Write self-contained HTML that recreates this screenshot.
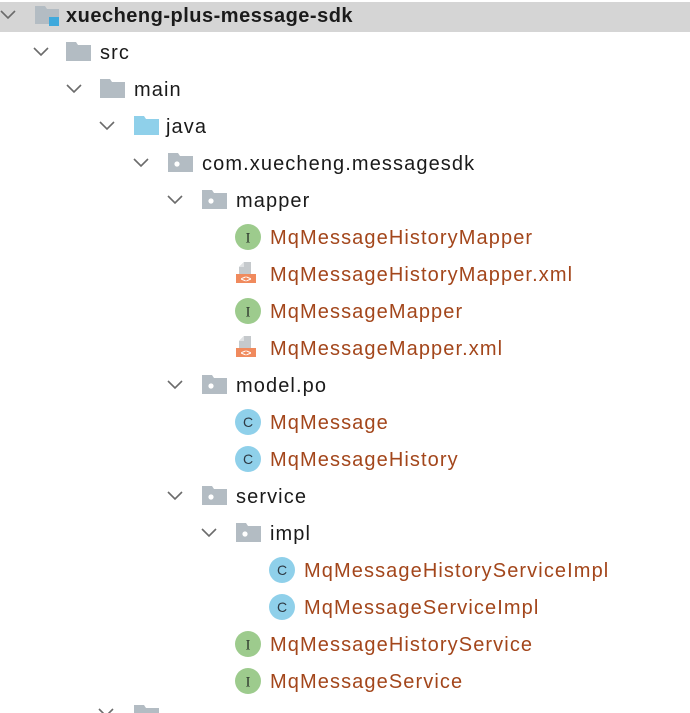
<!DOCTYPE html>
<html><head><meta charset="utf-8"><style>
body{margin:0;width:690px;height:713px;overflow:hidden;background:#fff;font-family:"Liberation Sans","Noto Sans CJK SC",sans-serif;position:relative}
.hdr{position:absolute;left:0;top:2px;width:690px;height:30px;background:#d5d5d5}
.r{position:absolute;height:37px;line-height:37px;font-size:20px;letter-spacing:1.1px;color:#1a1a1a;white-space:nowrap}
.o{color:#a3461b}
</style></head><body>
<div class="hdr"></div>
<svg width="690" height="713" style="position:absolute;left:0;top:0">
<defs>
<g id="chev"><path d="M0 0 L7 7 L14 0" fill="none" stroke="#6b6b6b" stroke-width="1.6"/></g>
<g id="fold"><path d="M0 0 H10 L12 3 H25 V19 H0 Z" fill="#b3bcc3"/></g>
<g id="pkg"><path d="M0 0 H10 L12 3 H25 V19 H0 Z" fill="#b3bcc3"/><circle cx="9" cy="11" r="2.6" fill="#fff"/></g>
<g id="jfold"><path d="M0 0 H10 L12 3 H25 V19 H0 Z" fill="#8fd0ea"/></g>
<g id="I"><circle cx="13" cy="13" r="13" fill="#9dcb8d"/><text x="13" y="18.5" font-family="Liberation Serif,serif" font-size="15" text-anchor="middle" fill="#2e3a2e">I</text></g>
<g id="C"><circle cx="13" cy="13" r="13" fill="#8fd0ea"/><text x="13" y="18" font-family="Liberation Sans,sans-serif" font-size="14" text-anchor="middle" fill="#2e3a44">C</text></g>
<g id="X"><path d="M8 0 H15 V12 H3 V5 Z" fill="#c5c9cc"/><path d="M8 0 V5 H3" fill="#e0e2e4"/><rect x="0" y="12" width="20" height="9" fill="#f08a5d"/><text x="10" y="20" font-family="Liberation Sans,sans-serif" font-size="9" font-weight="bold" text-anchor="middle" fill="#fff">&lt;&gt;</text></g>
</defs>
<use href="#chev" x="1" y="11"/>
<path d="M35 6 H45 L47 9 H59 V24 H35 Z" fill="#b3bcc3"/><rect x="49" y="17" width="10" height="9" fill="#3fa9dc"/>
<use href="#chev" x="34" y="48"/><use href="#fold" x="66" y="42"/>
<use href="#chev" x="67" y="85"/><use href="#fold" x="100" y="79"/>
<use href="#chev" x="100" y="122"/><use href="#jfold" x="134" y="116"/>
<use href="#chev" x="134" y="159"/><use href="#pkg" x="168" y="153"/>
<use href="#chev" x="168" y="196"/><use href="#pkg" x="202" y="190"/>
<use href="#I" x="235" y="224"/>
<use href="#X" x="236" y="262"/>
<use href="#I" x="235" y="298"/>
<use href="#X" x="236" y="336"/>
<use href="#chev" x="168" y="381"/><use href="#pkg" x="202" y="375"/>
<use href="#C" x="235" y="409"/>
<use href="#C" x="235" y="446"/>
<use href="#chev" x="168" y="492"/><use href="#pkg" x="202" y="486"/>
<use href="#chev" x="202" y="529"/><use href="#pkg" x="236" y="523"/>
<use href="#C" x="269" y="557"/>
<use href="#C" x="269" y="594"/>
<use href="#I" x="235" y="631"/>
<use href="#I" x="235" y="668"/>
<use href="#chev" x="99" y="709"/><use href="#fold" x="134" y="705"/>
</svg>
<div class="r" style="left:66px;top:-2px;font-weight:bold;font-size:20px;letter-spacing:0.5px">xuecheng-plus-message-sdk</div>
<div class="r" style="left:100px;top:35px">src</div>
<div class="r" style="left:134px;top:72px">main</div>
<div class="r" style="left:166px;top:109px">java</div>
<div class="r" style="left:202px;top:146px">com.xuecheng.messagesdk</div>
<div class="r" style="left:236px;top:183px">mapper</div>
<div class="r o" style="left:270px;top:220px">MqMessageHistoryMapper</div>
<div class="r o" style="left:270px;top:257px">MqMessageHistoryMapper.xml</div>
<div class="r o" style="left:270px;top:294px">MqMessageMapper</div>
<div class="r o" style="left:270px;top:331px">MqMessageMapper.xml</div>
<div class="r" style="left:236px;top:368px">model.po</div>
<div class="r o" style="left:270px;top:405px">MqMessage</div>
<div class="r o" style="left:270px;top:442px">MqMessageHistory</div>
<div class="r" style="left:236px;top:479px">service</div>
<div class="r" style="left:270px;top:516px">impl</div>
<div class="r o" style="left:304px;top:553px">MqMessageHistoryServiceImpl</div>
<div class="r o" style="left:304px;top:590px">MqMessageServiceImpl</div>
<div class="r o" style="left:270px;top:627px">MqMessageHistoryService</div>
<div class="r o" style="left:270px;top:664px">MqMessageService</div>
</body></html>
